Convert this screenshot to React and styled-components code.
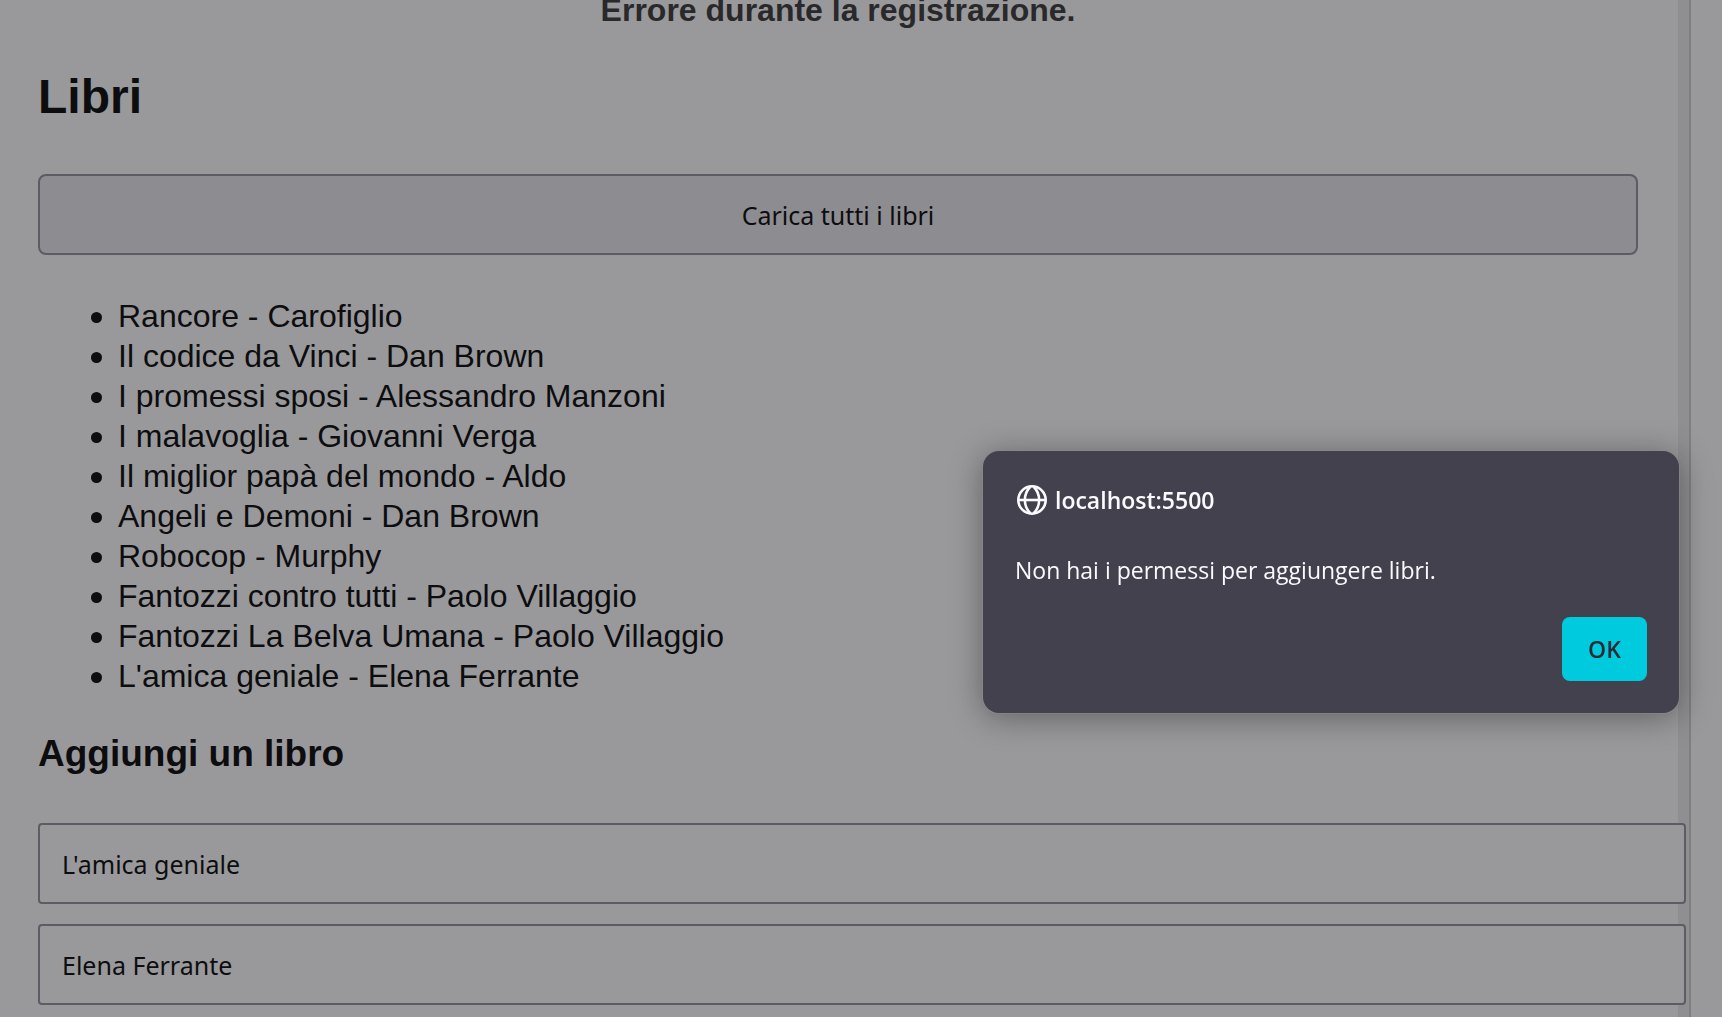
import React from 'react';
import styled, { createGlobalStyle } from 'styled-components';

const GlobalStyle = createGlobalStyle`
  * { box-sizing: border-box; }
  html { background: #99999b; }
  body {
    margin: 0;
    overflow: hidden;
    color: #0d0d0f;
    font-family: "Liberation Sans", Arial, sans-serif;
    font-size: 32px;
  }
`;

const Page = styled.div`
  display: grid;
  grid-template-columns: minmax(0, 1fr) 13px 31px;
  min-height: 100vh;
`;

const Card = styled.main`
  position: relative;
  z-index: 1;
  padding: 0 40px 12px 38px;
`;

const Gutter = styled.div`
  background: #8f8f91;
  border-right: 2px solid #7f7f81;
`;

const Message = styled.p`
  margin: 0;
  line-height: 20px;
  font-weight: 700;
  text-align: center;
  color: #29292b;
`;

const Title = styled.h2`
  margin: 46px 0;
  font-size: 48px;
  line-height: 62px;
`;

const Subtitle = styled.h3`
  margin: 34px 0 45px;
  font-size: 37px;
  line-height: 48px;
`;

const LoadButton = styled.button`
  display: block;
  width: 100%;
  height: 81px;
  border: 2px solid #5c5b66;
  border-radius: 8px;
  background: #8d8c91;
  color: #0d0d0f;
  font-family: "Noto Sans", sans-serif;
  font-size: 25px;
`;

const BookList = styled.ul`
  margin: 41px 0 0;
  padding: 0 0 0 53px;
  list-style: none;
`;

const Book = styled.li`
  display: flex;
  align-items: center;
  gap: 16px;
  line-height: 40px;

  &::before {
    content: "";
    width: 11px;
    height: 11px;
    margin-top: 2px;
    border-radius: 50%;
    background: #0d0d0f;
  }
`;

const Form = styled.form`
  display: flex;
  flex-direction: column;
  align-items: flex-start;
  gap: 20px;
`;

const TextField = styled.input`
  box-sizing: content-box;
  width: 100%;
  height: 77px;
  padding: 0 22px;
  border: 2px solid #5c5b66;
  border-radius: 4px;
  outline: none;
  background: #99999b;
  color: #0d0d0f;
  font-family: "Noto Sans", sans-serif;
  font-size: 25px;
`;

const Dialog = styled.div`
  position: fixed;
  z-index: 2;
  top: 451px;
  right: 43px;
  display: flex;
  flex-direction: column;
  width: 696px;
  padding: 32px;
  border-radius: 16px;
  background: #42414d;
  box-shadow: 0 0 0 1px rgba(140, 140, 142, 0.5), 0 4px 32px rgba(12, 12, 13, 0.4);
  color: #fbfbfe;
  font-family: "Open Sans", sans-serif;
  font-size: 23px;
  line-height: 32px;
`;

const DialogHeader = styled.div`
  display: flex;
  align-items: center;
  gap: 6px;
  font-weight: 600;
`;

const DialogText = styled.p`
  margin: 37px 0 31px;
`;

const OkButton = styled.button`
  align-self: flex-end;
  width: 85px;
  height: 64px;
  padding: 0;
  border: 0;
  border-radius: 8px;
  background: #00cade;
  color: #2b2a33;
  font: inherit;
  font-weight: 600;
`;

const GlobeIcon = () => (
  <svg width="34" height="34" viewBox="0 0 34 34" fill="none" stroke="#fbfbfe" strokeWidth="2.6" aria-hidden="true">
    <circle cx="17" cy="17" r="13.7" />
    <path d="M3 17h28" />
    <path d="M15.5 3.5C8 11 8 23 15.5 30.5M18.5 3.5C26 11 26 23 18.5 30.5" />
  </svg>
);

const books = [
  'Rancore - Carofiglio',
  'Il codice da Vinci - Dan Brown',
  'I promessi sposi - Alessandro Manzoni',
  'I malavoglia - Giovanni Verga',
  'Il miglior papà del mondo - Aldo',
  'Angeli e Demoni - Dan Brown',
  'Robocop - Murphy',
  'Fantozzi contro tutti - Paolo Villaggio',
  'Fantozzi La Belva Umana - Paolo Villaggio',
  "L'amica geniale - Elena Ferrante",
];

export default function App() {
  return (
    <>
      <GlobalStyle />
      <Page>
        <Card>
          <Message>Errore durante la registrazione.</Message>
          <Title>Libri</Title>
          <LoadButton type="button">Carica tutti i libri</LoadButton>
          <BookList>
            {books.map((book) => (
              <Book key={book}>{book}</Book>
            ))}
          </BookList>
          <Subtitle>Aggiungi un libro</Subtitle>
          <Form>
            <TextField type="text" aria-label="Titolo" defaultValue="L'amica geniale" />
            <TextField type="text" aria-label="Autore" defaultValue="Elena Ferrante" />
          </Form>
        </Card>
        <Gutter />
      </Page>
      <Dialog role="alertdialog" aria-labelledby="dialog-title" aria-describedby="dialog-text">
        <DialogHeader>
          <GlobeIcon />
          <span id="dialog-title">localhost:5500</span>
        </DialogHeader>
        <DialogText id="dialog-text">Non hai i permessi per aggiungere libri.</DialogText>
        <OkButton type="button">OK</OkButton>
      </Dialog>
    </>
  );
}
